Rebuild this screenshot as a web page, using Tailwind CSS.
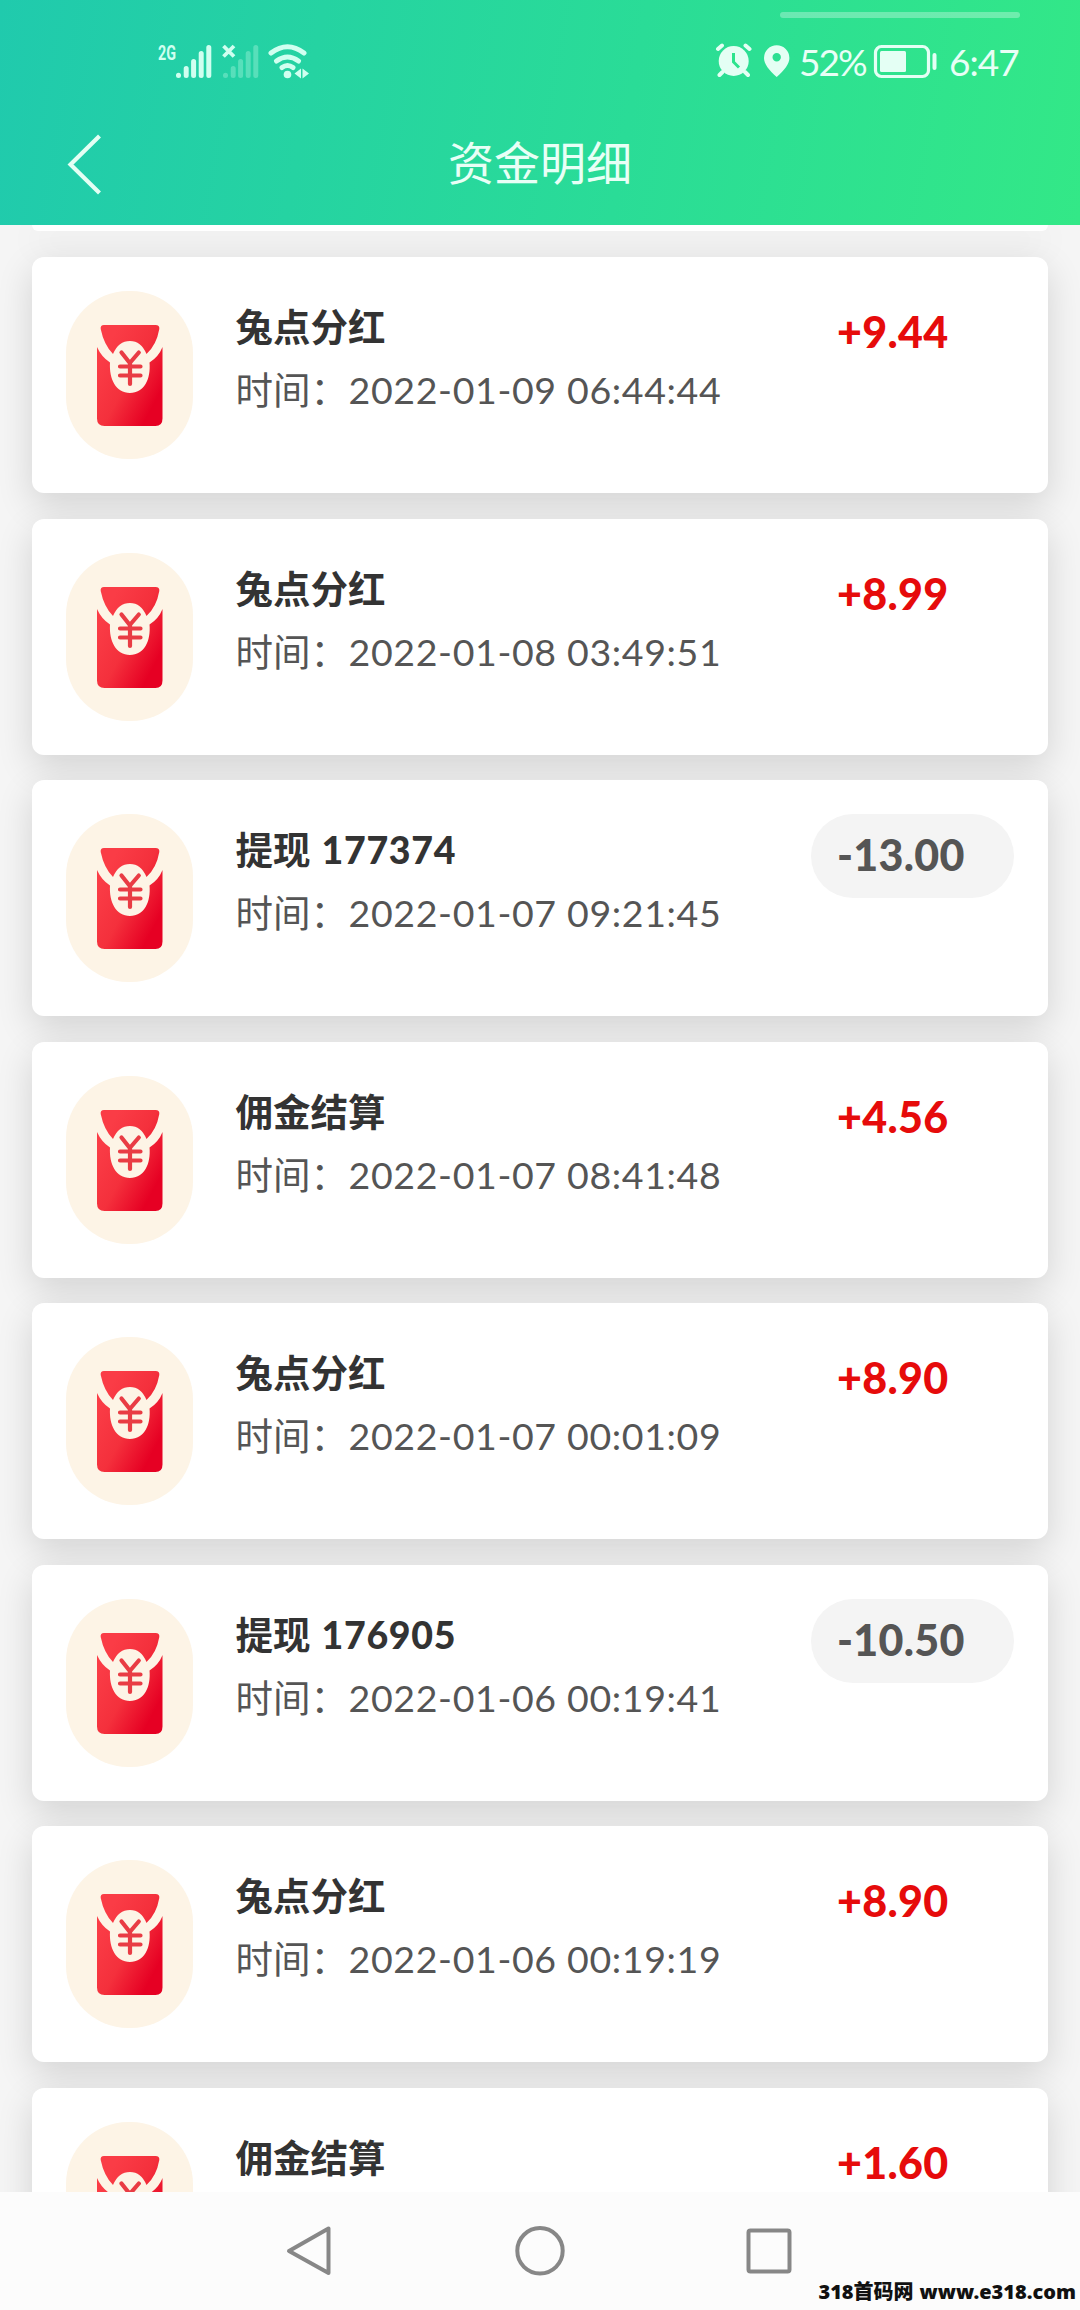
<!DOCTYPE html>
<html lang="zh-CN">
<head>
<meta charset="utf-8">
<title>资金明细</title>
<script src="https://cdn.jsdelivr.net/npm/@tailwindcss/browser@4"></script>
</head>
<body class="w-[1080px] h-[2310px] overflow-hidden bg-[#f5f5f5] font-['Lato','Noto_Sans_CJK_SC',sans-serif]">
<div class="relative flex h-full flex-col">
  <header class="relative z-10 flex h-[225px] shrink-0 flex-col bg-[linear-gradient(100deg,#20caad_0%,#2adc97_58%,#33e887_100%)] text-[#e8fff6]">
    <div class="absolute left-[780px] top-3 h-1.5 w-60 rounded-full bg-white/30"></div>
    <div class="flex h-[100px] items-center pt-[22px] pl-[156px] pr-[61px]">
      <svg class="h-[46px] w-[160px]" viewBox="156 38 160 46" fill="none" stroke="#d0fff0" stroke-linecap="round">
        <text x="158" y="60" fill="#d0fff0" stroke="none" font-family="Roboto" font-weight="700" font-size="20" textLength="18" lengthAdjust="spacingAndGlyphs">2G</text>
        <path stroke-width="5" d="M178.500 75.300v.1M186.200 75.500v-7M193.600 75.500v-14M201.200 75.500v-22M208.800 75.500v-28"/>
        <path stroke-width="5" opacity=".3" d="M225.500 75.300v.1M233.200 75.500v-7M240.600 75.500v-14M248.200 75.500v-22M255.800 75.500v-28"/>
        <path stroke-width="3.800" stroke-linecap="butt" d="M223.500 46l10.500 10.500M234 46l-10.500 10.500"/>
        <path stroke-width="5" d="M271 53Q287.500 40.500 304 53M276.500 61Q287.500 53 298.500 61M282 67.500Q287.500 63.500 293 67.500"/>
        <circle cx="287.500" cy="74.500" r="3.800" fill="#d0fff0" stroke="none"/>
        <path fill="#d0fff0" stroke="none" d="M294.500 73.500l6.500-5v10zM309 73.500l-6.500-5v10z"/>
      </svg>
      <div class="ml-auto flex items-center">
        <svg class="h-[36px] w-[78px]" viewBox="714 44 78 36">
          <circle cx="733.700" cy="62" r="15" fill="#e4fff4"/>
          <path d="M718 50l4-3.500M749.500 50l-4-3.500M722.500 73l-3 3M745 73l3 3" stroke="#e4fff4" stroke-width="4" stroke-linecap="round"/>
          <path d="M733.500 54v9l5.500 5.500" fill="none" stroke="#2de48d" stroke-width="3"/>
          <path fill-rule="evenodd" fill="#e4fff4" d="M776.700 78C769 71 764 65 764 59a12.700 12.700 0 0 1 25.400 0c0 6-5 12-12.700 19zM776.700 54a4.200 4.200 0 1 0 0 8.400 4.200 4.200 0 0 0 0-8.400z"/>
        </svg>
        <span class="ml-[7px] w-[70px] whitespace-nowrap text-[37px] leading-none tracking-[-2px]">52%</span>
        <svg class="ml-1 h-[36px] w-[66px]" viewBox="873 44 66 36">
          <rect x="875.500" y="47.500" width="53" height="30" rx="6" fill="none" stroke="#e4fff4" stroke-width="3.200"/>
          <rect x="880" y="52" width="26" height="21" rx="1.500" fill="#e4fff4"/>
          <rect x="932.500" y="54" width="4" height="17" rx="2" fill="#e4fff4"/>
        </svg>
        <span class="ml-[10px] w-[70px] whitespace-nowrap text-[37px] leading-none tracking-[-1px]">6:47</span>
      </div>
    </div>
    <div class="relative flex h-[125px] items-start justify-center">
      <svg class="absolute left-[64px] top-[32px] h-[64px] w-[40px]" viewBox="0 0 40 64" fill="none" stroke="#e4fff4" stroke-width="4.200"><path d="M35.500 4L6.500 32.500L35.500 61"/></svg>
      <h1 class="mt-[37px] text-[46px] leading-[52px]">资金明细</h1>
    </div>
  </header>

  <main id="list" class="flex min-h-0 flex-1 flex-col overflow-hidden px-8">
    <div class="h-[6.400px] shrink-0 rounded-b-xl bg-white shadow-[0_12px_36px_rgba(0,0,0,0.14)]"></div>
  </main>

  <nav class="relative z-10 flex h-[118px] shrink-0 bg-[#fcfcfc]">
    <svg class="h-[118px] w-[1080px]" viewBox="0 2192 1080 118" fill="none" stroke="#878787" stroke-width="4" stroke-linejoin="round">
      <path d="M328.500 2228.500v44.500L289 2251z"/>
      <circle cx="540" cy="2250.800" r="22.700"/>
      <rect x="748.500" y="2230.500" width="41" height="41" rx="2"/>
    </svg>
    <div class="absolute right-[4px] bottom-[7px] flex gap-[6px] whitespace-nowrap font-['Noto_Sans','Noto_Sans_CJK_SC',sans-serif] text-[20px] leading-[22px] font-black text-[#111]"><span>318首码网</span><span>www.e318.com</span></div>
  </nav>
</div>

<template id="row">
  <article class="mt-[25.570px] flex h-[236px] shrink-0 items-start rounded-xl bg-white pl-[34px] pr-[34px] pt-[34px] shadow-[0_12px_36px_rgba(0,0,0,0.14)]">
    <div class="flex h-[168px] w-[127px] shrink-0 items-center justify-center rounded-[62px] bg-[#fdf4e6]">
      <svg class="h-[104px] w-[68px]" viewBox="0 0 68 104">
        <defs><linearGradient id="g" gradientUnits="userSpaceOnUse" x1="8" y1="30" x2="68" y2="62"><stop offset="0" stop-color="#fa3c46"/><stop offset=".5" stop-color="#f4303c"/><stop offset="1" stop-color="#e60023"/></linearGradient></defs>
        <path fill="url(#g)" d="M8 2H59.500Q63.800 2 63.300 6Q60.500 22 50.500 31Q45 18 34 18Q22.500 18 17 31Q8 22 4.700 6Q4.200 2 8 2z"/>
        <path fill="url(#g)" d="M1 24Q5.500 34 14 39.500C13 56 20 70 34 70S55 56 53.500 39.500Q62.500 34 66.500 24V95.500Q66.500 103 59.500 103H8.500Q1 103 1 95.500z"/>
        <path fill="none" stroke="#e93c44" stroke-width="4.200" stroke-linecap="round" stroke-linejoin="round" d="M25.500 29.500l8.300 10.500l9-10.500M34 40v21M24 43.500h20.500M24 52.500h20.500"/>
      </svg>
    </div>
    <div class="ml-[42.500px] flex flex-col whitespace-nowrap">
      <h2 class="mt-[8px] flex h-[56px] gap-[11px] text-[37.500px] leading-[56px] font-bold text-[#333]"><span data-t></span><span data-n class="font-black tracking-[0.700px]"></span></h2>
      <p data-p class="mt-[7px] flex h-[56px] text-[37.500px] leading-[56px] text-[#555]"><span class="w-[113px]">时间：</span><span data-d class="tracking-[0.640px]"></span></p>
    </div>
    <div data-a class="ml-auto h-[84px] w-[203px] whitespace-nowrap rounded-full pl-[26px] text-[43px] leading-[82px] font-black tracking-[0.300px]"></div>
  </article>
</template>
<script>
const rows = [
  ["兔点分红","2022-01-09 06:44:44","+9.44"],
  ["兔点分红","2022-01-08 03:49:51","+8.99"],
  ["提现 177374","2022-01-07 09:21:45","-13.00"],
  ["佣金结算","2022-01-07 08:41:48","+4.56"],
  ["兔点分红","2022-01-07 00:01:09","+8.90"],
  ["提现 176905","2022-01-06 00:19:41","-10.50"],
  ["兔点分红","2022-01-06 00:19:19","+8.90"],
  ["佣金结算","","+1.60"]
];
const list = document.getElementById("list"), tpl = document.getElementById("row");
rows.forEach(([t, d, a]) => {
  const n = tpl.content.cloneNode(true);
  const [name, num = ""] = t.split(" ");
  n.querySelector("[data-t]").textContent = name;
  n.querySelector("[data-n]").textContent = num;
  if (d) n.querySelector("[data-d]").textContent = d;
  else n.querySelector("[data-p]").remove();
  const el = n.querySelector("[data-a]");
  el.textContent = a;
  el.classList.add(...(a[0] === "-" ? ["bg-[#f4f4f4]", "text-[#555]"] : ["text-[#e60b0b]"]));
  list.append(n);
});
</script>
</body>
</html>
